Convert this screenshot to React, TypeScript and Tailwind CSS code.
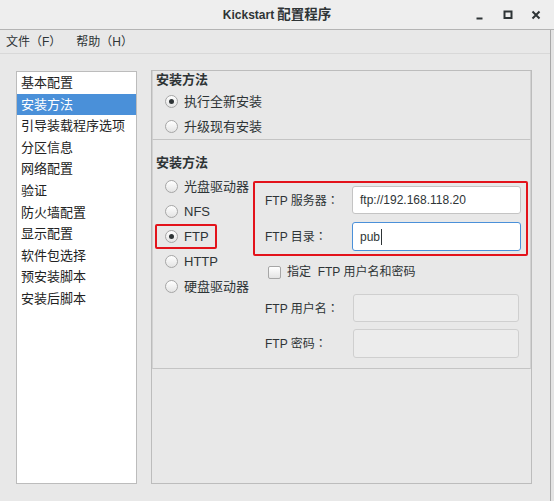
import React from "react";

const FONT = "font-['Liberation_Sans','Noto_Sans_CJK_SC',sans-serif]";

function Radio({ checked }: { checked?: boolean }) {
  return (
    <span className="w-[13px] h-[13px] rounded-full border border-[#a6a6a6] bg-gradient-to-b from-white to-[#e4e4e4] flex items-center justify-center shrink-0">
      {checked && <span className="w-[5px] h-[5px] rounded-full bg-[#2e3436]" />}
    </span>
  );
}

function RadioRow({ label, checked, children }: { label: string; checked?: boolean; children?: React.ReactNode }) {
  return (
    <div className="relative h-[25px] flex items-center pl-[12px]">
      <Radio checked={checked} />
      <span className="ml-[6px] text-[13px] text-[#2e3436] leading-none">{label}</span>
      {children}
    </div>
  );
}

function Label({ text, w }: { text: string; w: string }) {
  return (
    <span className={`${w} pl-[3px] whitespace-nowrap`}>
      {text}
      <span className="font-['Noto_Sans_CJK_JP',sans-serif]">：</span>
    </span>
  );
}

const items = [
  "基本配置",
  "安装方法",
  "引导装载程序选项",
  "分区信息",
  "网络配置",
  "验证",
  "防火墙配置",
  "显示配置",
  "软件包选择",
  "预安装脚本",
  "安装后脚本",
];

export default function App() {
  return (
    <div className={`w-[554px] h-[501px] bg-[#e8e8e8] overflow-hidden flex flex-col ${FONT} text-[#2e3436]`}>
      {/* Title bar */}
      <div className="h-[30px] shrink-0 bg-[#eeeeee] border-b border-[#b4b4b4] grid grid-cols-[1fr_auto_1fr] items-center">
        <div />
        <div className="font-bold text-[#2e3436] flex items-baseline gap-[3px] pt-[1px]">
          <span className="text-[12px]">Kickstart</span>
          <span className="text-[13.5px]">配置程序</span>
        </div>
        <div className="flex justify-end pr-[4px] h-full">
          <div className="w-[28px] h-full flex items-center justify-center">
            <svg width="10" height="10" viewBox="0 0 10 10">
              <path d="M1.5 8.5 H7.5" stroke="#2e3436" strokeWidth="2" />
            </svg>
          </div>
          <div className="w-[28px] h-full flex items-center justify-center">
            <svg width="10" height="10" viewBox="0 0 10 10">
              <rect x="1.5" y="1.5" width="7" height="6.5" fill="none" stroke="#2e3436" strokeWidth="2" />
            </svg>
          </div>
          <div className="w-[28px] h-full flex items-center justify-center">
            <svg width="10" height="10" viewBox="0 0 10 10">
              <path d="M1.5 1.5 L8.5 8.5 M8.5 1.5 L1.5 8.5" stroke="#2e3436" strokeWidth="2" />
            </svg>
          </div>
        </div>
      </div>

      <div className="flex-1 flex">
        <div className="flex-1 flex flex-col">
          {/* Menu bar */}
          <div className="h-[24px] shrink-0 border-b border-[#d8d8d8] flex items-center pl-[6px] gap-[15px] text-[12px] text-[#2e3436]">
            <span>文件（F）</span>
            <span>帮助（H）</span>
          </div>

          {/* Body */}
          <div className="flex-1 flex pl-[16px] pt-[16px]">
            {/* Left list */}
            <div className="mt-[1px] w-[121px] h-[413px] bg-white border border-[#bcbcbc] flex flex-col">
              {items.map((t, i) => (
                <div
                  key={t}
                  className={`h-[21.6px] flex items-center pl-[4px] text-[13px] ${
                    i === 1 ? "bg-[#4a90d9] text-white" : "text-[#222222]"
                  }`}
                >
                  {t}
                </div>
              ))}
            </div>

            {/* Right panel */}
            <div className="ml-[14px] w-[381px] h-[414px] border border-[#bcbcbc] bg-[#e8e8e8] flex flex-col">
              {/* Frame 1 */}
              <div className="h-[69px] border-b border-[#c4c4c4] border-l border-l-[#d2d2d2] border-r border-r-[#d2d2d2] flex flex-col">
                <div className="h-[18px] pl-[3px] font-bold text-[13px] leading-[18px] text-[#2e3436]">安装方法</div>
                <RadioRow label="执行全新安装" checked />
                <RadioRow label="升级现有安装" />
              </div>

              {/* Frame 2 */}
              <div className="h-[229px] border-b border-[#c4c4c4] border-l border-l-[#d2d2d2] border-r border-r-[#d2d2d2] flex flex-col pt-[14px]">
                <div className="h-[18px] pl-[3px] font-bold text-[13px] leading-[18px] text-[#2e3436]">安装方法</div>
                <div className="flex">
                  {/* Left radios */}
                  <div className="w-[109px] pt-[2px] flex flex-col">
                    <RadioRow label="光盘驱动器" />
                    <RadioRow label="NFS" />
                    <RadioRow label="FTP" checked>
                      <div className="absolute left-[2px] top-0 w-[62px] h-[25px] border-2 border-[#e3131b] rounded-[2px]" />
                    </RadioRow>
                    <RadioRow label="HTTP" />
                    <RadioRow label="硬盘驱动器" />
                  </div>

                  {/* Right form */}
                  <div className="w-[260px] pt-[14px] flex flex-col text-[12px]">
                    <div className="relative flex flex-col gap-[8px]">
                      <div className="h-[28px] flex items-center">
                        <Label text="FTP 服务器" w="w-[90px]" />
                        <div className="w-[169px] h-full bg-white border border-[#c4c4c4] rounded-[3px] flex items-center pl-[7px] text-[12px] text-[#2e3436]">
                          ftp://192.168.118.20
                        </div>
                      </div>
                      <div className="h-[29px] flex items-center">
                        <Label text="FTP 目录" w="w-[90px]" />
                        <div className="w-[169px] h-full bg-white border border-[#4a90d9] rounded-[3px] flex items-center pl-[7px] text-[12px] text-[#2e3436]">
                          pub<span className="w-[1px] h-[16px] bg-[#2e3436] ml-[1px]" />
                        </div>
                      </div>
                      <div className="absolute left-[-9px] top-[-5px] w-[275px] h-[75px] border-2 border-[#e3131b] rounded-[2px]" />
                    </div>

                    <div className="mt-[7px] h-[28px] flex items-center pl-[6px]">
                      <span className="w-[13px] h-[13px] border border-[#a6a6a6] rounded-[2px] bg-gradient-to-b from-white to-[#e4e4e4] shrink-0" />
                      <span className="ml-[6px] whitespace-pre text-[#2e3436]">指定  FTP 用户名和密码</span>
                    </div>

                    <div className="mt-[8px] h-[28px] flex items-center">
                      <Label text="FTP 用户名" w="w-[91px]" />
                      <div className="w-[166px] h-full bg-[#ececec] border border-[#cfcfcf] rounded-[3px]" />
                    </div>
                    <div className="mt-[7px] h-[29px] flex items-center">
                      <Label text="FTP 密码" w="w-[91px]" />
                      <div className="w-[166px] h-full bg-[#ececec] border border-[#cfcfcf] rounded-[3px]" />
                    </div>
                  </div>
                </div>
              </div>
            </div>
          </div>
        </div>

        {/* Right window edge */}
        <div className="w-[4px] border-l border-[#a8a8a8] bg-[#e4e4e4]" />
      </div>
    </div>
  );
}
